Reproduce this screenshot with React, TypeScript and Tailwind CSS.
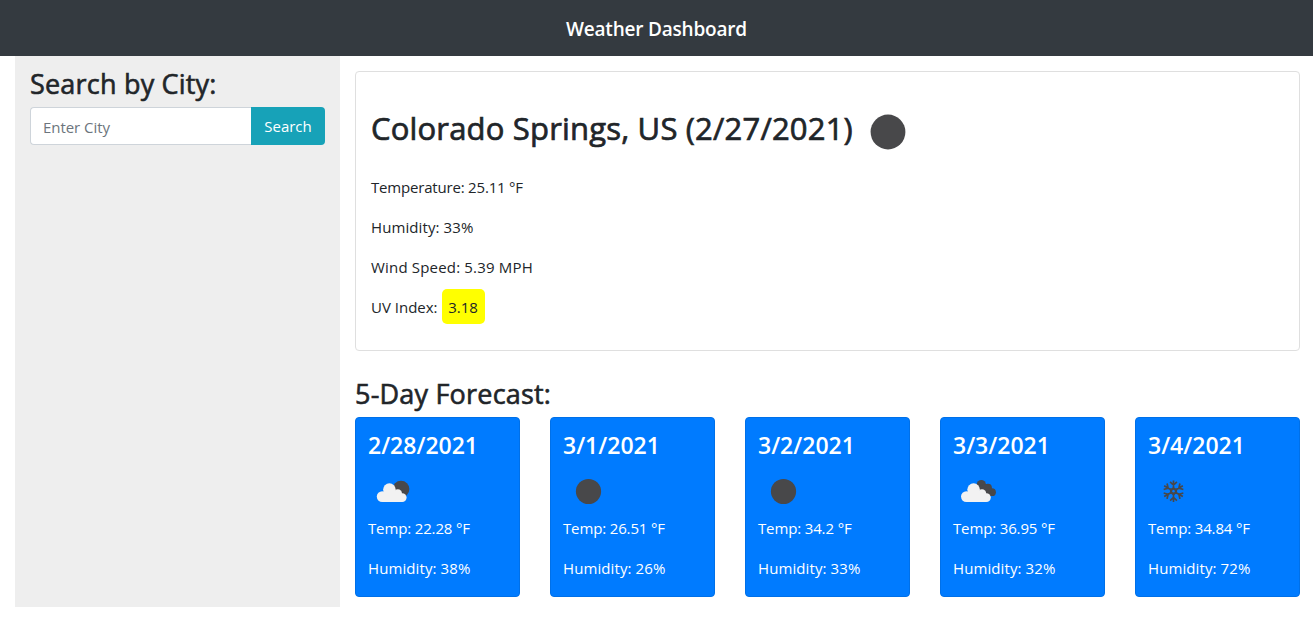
import React from "react";

type IconKind = "broken" | "clear" | "overcast" | "snow";

interface Day {
  date: string;
  icon: IconKind;
  temp: string;
  humidity: string;
}

const days: Day[] = [
  { date: "2/28/2021", icon: "broken", temp: "22.28", humidity: "38" },
  { date: "3/1/2021", icon: "clear", temp: "26.51", humidity: "26" },
  { date: "3/2/2021", icon: "clear", temp: "34.2", humidity: "33" },
  { date: "3/3/2021", icon: "overcast", temp: "36.95", humidity: "32" },
  { date: "3/4/2021", icon: "snow", temp: "34.84", humidity: "72" },
];

function Cloud() {
  return (
    <g fill="#f2f2f2">
      <circle cx="14.2" cy="30.6" r="5.4" />
      <circle cx="21.4" cy="23.6" r="6.3" />
      <circle cx="29.8" cy="27.4" r="4.2" />
      <circle cx="34.2" cy="31.6" r="4.4" />
      <path d="M14.2 36L16 25L26 26L31 27L34.2 36Z" />
    </g>
  );
}

function WeatherIcon({ kind }: { kind: IconKind }) {
  return (
    <svg viewBox="0 0 50 50" className="block size-[50px]">
      {kind === "clear" && <circle cx="25.5" cy="25.5" r="12.6" fill="#48484a" />}
      {kind === "broken" && (
        <>
          <circle cx="33" cy="23.1" r="8.4" fill="#48484a" />
          <Cloud />
        </>
      )}
      {kind === "overcast" && (
        <>
          <g fill="#48484a">
            <circle cx="28.3" cy="18.5" r="4.6" />
            <circle cx="35" cy="21.6" r="3.9" />
            <circle cx="39" cy="26.2" r="3.9" />
            <path d="M26 20L33 18L38.5 22.5L38.5 30.1L34 30L26 24Z" />
          </g>
          <g transform="translate(-0.8 0)">
            <Cloud />
          </g>
        </>
      )}
      {kind === "snow" && (
        <g transform="translate(25.5 25.2)" stroke="#48484a" strokeWidth="1.7" fill="none">
          {[0, 60, 120, 180, 240, 300].map((a) => (
            <path key={a} transform={`rotate(${a})`} d="M0 -1.4V-10.8M-3.4 -9.4L0 -6.2L3.4 -9.4M-2 -1.2L0 -3.6L2 -1.2" />
          ))}
        </g>
      )}
    </svg>
  );
}

export default function App() {
  return (
    <div className="flex h-[617px] flex-col bg-white font-['Open_Sans','Noto_Sans',sans-serif] text-[15px] leading-6 text-[#212529]">
      <header className="flex h-14 shrink-0 items-center justify-center bg-[#343a40] pt-0.5 text-[19px] font-semibold tracking-[-0.2px] text-white">
        <h1>Weather Dashboard</h1>
      </header>
      <div className="flex gap-[15px] pr-[13px] pl-[15px]">
        <aside className="h-[551px] w-[325px] shrink-0 bg-[#eeeeee] px-[15px] pt-[11px]">
          <h3 className="text-[27px] leading-[33px] tracking-[0.2px] whitespace-nowrap [-webkit-text-stroke:0.6px_#212529]">
            Search by City:
          </h3>
          <form className="mt-[7px] flex h-[38px]" onSubmit={(e) => e.preventDefault()}>
            <input
              className="h-full w-[221px] rounded-l-[4px] border border-r-0 border-[#ced4da] bg-white pt-0.5 pl-3 tracking-[-0.05px] outline-none placeholder:text-[#6c757d]"
              placeholder="Enter City"
            />
            <button className="h-full w-[74px] rounded-r-[4px] bg-[#17a2b8] text-white">Search</button>
          </form>
        </aside>
        <main className="min-w-0 flex-1 pt-[15px]">
          <section className="h-[280px] rounded-[4px] border border-[#dfdfdf] px-[15px] pt-8">
            <div className="flex h-[48px] items-center">
              <h2 className="text-[31px] leading-[40px] tracking-[0.18px] whitespace-nowrap [-webkit-text-stroke:0.7px_#212529]">
                Colorado Springs, US (2/27/2021)
              </h2>
              <svg viewBox="0 0 36 36" className="mt-2 ml-[17px] size-9 shrink-0">
                <circle cx="18" cy="18" r="17.4" fill="#48484a" />
              </svg>
            </div>
            <div className="mt-[23px] flex flex-col items-start gap-4">
              <p className="tracking-[-0.19px]">Temperature: 25.11 °F</p>
              <p className="tracking-[0.1px]">Humidity: 33%</p>
              <p className="tracking-[0.18px]">Wind Speed: 5.39 MPH</p>
              <p className="flex items-center">
                <span>UV Index:</span>
                <span className="-mt-[9px] -mb-2 ml-1 flex h-[35px] w-[43px] items-center justify-center rounded-[5px] bg-[#ffff00] pt-px">
                  3.18
                </span>
              </p>
            </div>
          </section>
          <h3 className="mt-[26px] mb-[7px] text-[27px] leading-[33px] tracking-[0.2px] whitespace-nowrap [-webkit-text-stroke:0.6px_#212529]">
            5-Day Forecast:
          </h3>
          <section className="grid grid-cols-5 gap-[30px]">
            {days.map((d) => (
              <article
                key={d.date}
                className="h-[180px] rounded-[4px] border border-[#0070e8] bg-[#007bff] px-3 pt-[13px] text-white"
              >
                <h4 className="text-[23px] leading-[29px] font-semibold">{d.date}</h4>
                <div className="mt-1.5">
                  <WeatherIcon kind={d.icon} />
                </div>
                <p className="tracking-[-0.14px]">Temp: {d.temp} °F</p>
                <p className="mt-4 tracking-[0.1px]">Humidity: {d.humidity}%</p>
              </article>
            ))}
          </section>
        </main>
      </div>
    </div>
  );
}
